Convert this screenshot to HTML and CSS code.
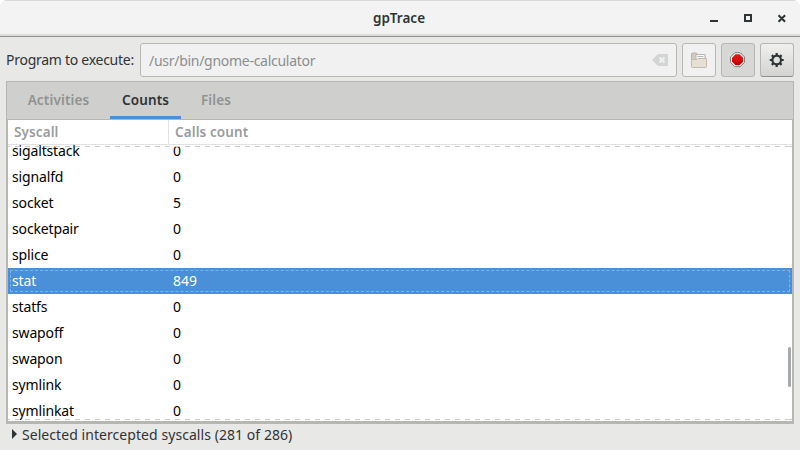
FILE: index.html
```
<!DOCTYPE html>
<html lang="en">
<head>
<meta charset="utf-8">
<title>gpTrace</title>
<link rel="stylesheet" href="styles.css">
</head>
<body>
<div class="window">
  <header class="titlebar">
    <h1>gpTrace</h1>
    <svg class="controls" width="78" height="12" viewBox="0 0 78 12" fill="none" stroke="#2e3436" stroke-width="2">
      <path d="M0 9h8M35 3h6v6h-6zM68.500 3.200l6.600 6.600M75.100 3.200l-6.600 6.600"/>
    </svg>
  </header>
  <div class="toolbar">
    <label>Program to execute:</label>
    <div class="entry"><span>/usr/bin/gnome-calculator</span>
      <svg width="16" height="12" viewBox="0 0 16 12"><path fill="#d3d5d4" d="M0 6l6-6h10v12H6z"/><path d="M7.500 3.500l5 5m0-5l-5 5" stroke="#f1f1f1" stroke-width="2"/></svg>
    </div>
    <button class="btn flat"><svg width="16" height="16" viewBox="0 0 16 16"><path d="M.5 13.500V2Q.5 1 1.500 1H5q1 0 1 1l1 1h7v5" fill="#d3cabd" stroke="#bdb3a6"/><path d="M5 2.500h9v6H5z" fill="#fafafa" stroke="#b5b5b2"/><path d="M6.500 4.500h6" stroke="#b5b8b8"/><path d="M.5 14.500V7.500H6l1-1h8.500v8q0 1-1 1h-13q-1 0-1-1z" fill="#e6dfd3" stroke="#c4b9aa"/></svg></button>
    <button class="btn pressed"><svg width="16" height="16" viewBox="0 0 16 16"><defs><linearGradient id="red" x2="0" y2="1"><stop stop-color="#ef1717"/><stop offset="1" stop-color="#c00000"/></linearGradient></defs><path d="M4.800.700h5.400l4.300 4.300v5.400l-4.300 4.300H4.800L.500 10.400V5z" fill="#f1f1ef" stroke="#7f827e"/><path d="M5.500 2.200h4l3.500 3.500v4l-3.500 3.500h-4L2 9.700v-4z" fill="url(#red)"/></svg></button>
    <button class="btn raised"><svg width="16" height="16" viewBox="0 0 16 16" fill="none" stroke="#2e3436"><circle cx="7.700" cy="8" r="4.300" stroke-width="2.200"/><path stroke-width="2.200" d="M7.700 1v2.300M7.700 12.700V15M.700 8H3M12.400 8h2.300M2.800 3.100l1.600 1.600M11 11.300l1.600 1.600M12.600 3.100L11 4.700M4.400 11.300l-1.600 1.600"/></svg></button>
  </div>
  <main class="notebook">
    <nav class="tabs"><span class="tab activities">Activities</span><span class="tab active">Counts</span><span class="tab files">Files</span></nav>
    <section class="tree">
      <div class="head"><span>Syscall</span><span>Calls count</span></div>
      <div class="view">
        <div class="rows">
          <div class="row"><span>sigaltstack</span><span>0</span></div>
          <div class="row"><span>signalfd</span><span>0</span></div>
          <div class="row"><span>socket</span><span>5</span></div>
          <div class="row"><span>socketpair</span><span>0</span></div>
          <div class="row"><span>splice</span><span>0</span></div>
          <div class="row selected"><span>stat</span><span>849</span></div>
          <div class="row"><span>statfs</span><span>0</span></div>
          <div class="row"><span>swapoff</span><span>0</span></div>
          <div class="row"><span>swapon</span><span>0</span></div>
          <div class="row"><span>symlink</span><span>0</span></div>
          <div class="row"><span>symlinkat</span><span>0</span></div>
        </div>
        <i class="dash top"></i><i class="dash bottom"></i><i class="thumb"></i>
      </div>
    </section>
  </main>
  <footer class="expander"><svg width="5" height="10" viewBox="0 0 5 10"><path d="M0 0l5 5-5 5z" fill="#2e3436"/></svg><span>Selected intercepted syscalls (281 of 286)</span></footer>
</div>
</body>
</html>
```
FILE: styles.css
```
* { box-sizing: border-box; }
body { margin: 0; background: #fff; color: #2e3436; font: 14px "Noto Sans", sans-serif; overflow: hidden; }
.window { width: 800px; height: 450px; display: flex; flex-direction: column; background: #e8e8e7; border-radius: 7px 7px 0 0; overflow: hidden; }
.titlebar { position: relative; height: 37px; flex: none; display: flex; justify-content: center; align-items: center; background: #f3f3f3; border-top: 1px solid #d9d9d9; border-bottom: 1px solid #8f908a; box-shadow: inset 0 -2px #dededc; }
h1 { margin: 0 2px 1px 0; font-size: 13.5px; font-weight: 600; letter-spacing: 0; }
.controls { position: absolute; left: 710px; top: 11px; }
.toolbar { display: flex; height: 44px; flex: none; padding: 6px 6px 4px; gap: 5px; }
label { width: 129px; line-height: 34px; white-space: nowrap; letter-spacing: -.27px; }
.entry { flex: 1; height: 34px; border: 1px solid #b6b6b3; border-radius: 3px; background: #f1f1f1; color: #8b8e8f; display: flex; align-items: center; justify-content: space-between; padding: 0 8px; letter-spacing: -.28px; }
.btn { width: 34px; height: 34px; padding: 0; border: 1px solid #b6b6b3; border-radius: 3px; display: grid; place-items: center; }
.flat { background: #f1f1f1; }
.pressed { background: #d7d7d6; }
.raised { background: linear-gradient(#f0f0ef, #d3d3d2); border-bottom-color: #8f908a; }
.notebook { margin: 0 6px; height: 343px; flex: none; border: 1px solid #b6b6b3; border-width: 1px 1px 3px; background: #b6b6b3; }
.tabs { height: 38px; display: flex; background: #cfcfcd; border-bottom: 1px solid #b6b6b3; font-weight: 600; color: #8f9393; line-height: 37px; padding-left: 5px; }
.tab { text-align: center; height: 37px; font-size: 13.5px; letter-spacing: .15px; }
.activities { width: 93px; }
.active { width: 71px; margin-left: 5px; color: #2e3436; border-bottom: 3px solid #4a90d9; }
.files { width: 60px; margin-left: 5px; }
.tree { margin: 0 1px; height: 301px; background: #fff; }
.head { height: 25px; display: flex; border-bottom: 1px solid #e2e2e1; font-size: 13.5px; font-weight: 600; letter-spacing: .1px; color: #999c9d; line-height: 24px; }
.head span { padding-left: 6px; }
.head span:first-child { width: 161px; border-right: 1px solid #e2e2e1; }
.view { position: relative; height: 276px; color: #000; }
.rows { position: relative; top: -7px; }
.row { height: 26px; line-height: 26px; display: flex; padding-left: 4px; position: relative; letter-spacing: -.15px; }
.row span:first-child { width: 161px; }
.row span:last-child { letter-spacing: 0; }
.selected { color: #fff; background: #4a90d9; }
.selected::after { content: ""; position: absolute; inset: 2px; border: 1px dashed #82b2e5; }
.dash { position: absolute; left: 0; right: 0; height: 1px; background: repeating-linear-gradient(90deg, #cacaca 0 5px, transparent 5px 10px) -3px 0; }
.dash.top { top: 1px; }
.dash.bottom { bottom: 1px; }
.thumb { position: absolute; right: 1px; top: 202px; width: 3px; height: 40px; border-radius: 2px; background: #a5a9a9; }
.expander { display: flex; align-items: center; padding-left: 12px; gap: 5px; height: 20px; letter-spacing: .06px; }
```
